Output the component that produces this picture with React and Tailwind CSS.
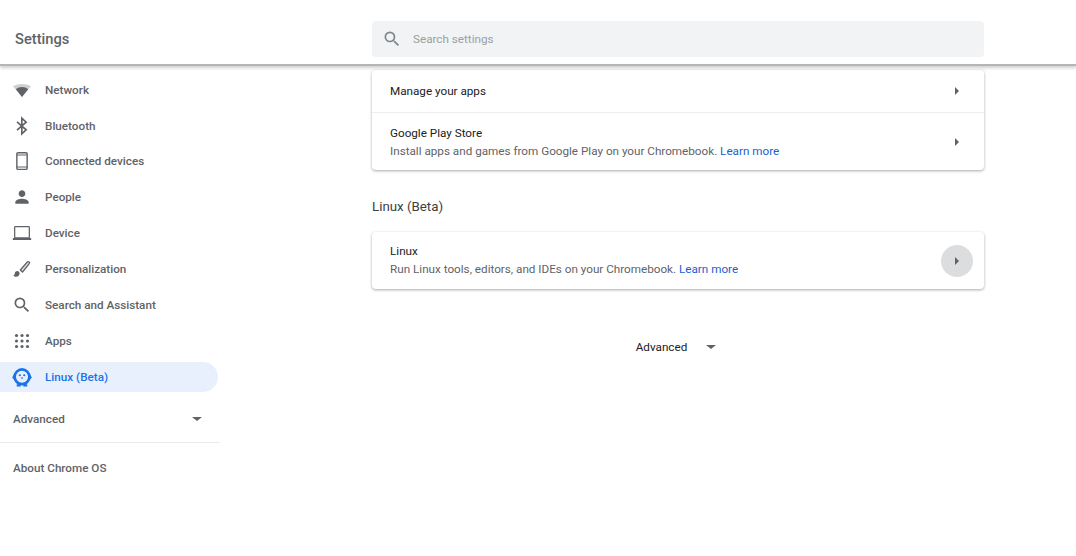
const I = ({ d, x = "" }) => (
  <svg viewBox="0 0 24 24" className={`w-[20px] h-[20px] fill-current ${x}`}><path d={d} /></svg>
);
const dots = [];
for (const cx of [5.4, 12, 18.6]) for (const cy of [5.4, 12, 18.6]) dots.push([cx, cy]);
const icons = {
  wifi: <svg viewBox="0 0 24 24" className="w-[20px] h-[20px]"><path d="M12 20.4 L1.2 7.4 C4.4 5.6 8 4.8 12 4.8 C16 4.8 19.6 5.6 22.8 7.4 Z" fill="#5f6368" fillOpacity="0.3"/><path d="M12 20.4 L4.6 11 C6.8 9.2 9.2 8.4 12 8.4 C14.8 8.4 17.2 9.2 19.4 11 Z" fill="#5f6368"/></svg>,
  bt: <svg viewBox="0 0 24 24" className="w-[20px] h-[20px]" fill="none" stroke="currentColor" strokeWidth="2"><path d="M6 7 L17 16.5 L11.8 21.5 V2.5 L17 7.5 L6 17" /></svg>,
  phone: <svg viewBox="0 0 24 24" className="w-[20px] h-[20px]" fill="none" stroke="currentColor"><rect x="5.8" y="2" width="12.4" height="20" rx="1.4" strokeWidth="1.7" /><path d="M5.8 4.8 H18.2 M5.8 19.2 H18.2" strokeWidth="1.3" /></svg>,
  person: <I d="M12 12c2.21 0 4-1.79 4-4s-1.79-4-4-4-4 1.79-4 4 1.79 4 4 4zm0 2c-2.67 0-8 1.34-8 4v2h16v-2c0-2.66-5.33-4-8-4z" />,
  laptop: <svg viewBox="0 0 24 24" className="w-[20px] h-[20px]"><rect x="3.2" y="4.2" width="17.6" height="13.6" rx="0.8" fill="none" stroke="currentColor" strokeWidth="1.5" /><path d="M1 18 H23 L23 20.4 H1 Z" fill="currentColor" /></svg>,
  brush: <svg viewBox="0 0 24 24" className="w-[20px] h-[20px]"><path d="M6.5 14.5c-1.9 0-3.2 1.4-3.2 3 0 1.3-.8 2-1.8 2.2.9 1.1 2.4 1.6 3.6 1.6 2.3 0 4-1.8 4-3.8 0-1.6-1.1-3-2.6-3z" fill="currentColor" /><path d="M10 13.2 L18.4 3.6 C19 3 19.9 3 20.6 3.6 C21.2 4.2 21.2 5 20.7 5.6 L12.6 15.6 Z" fill="#e3e4e5" stroke="currentColor" strokeWidth="1.6" strokeLinejoin="round" /></svg>,
  search: <I d="M15.5 14h-.79l-.28-.27A6.471 6.471 0 0 0 16 9.5 6.5 6.5 0 1 0 9.5 16c1.61 0 3.09-.59 4.23-1.57l.27.28v.79l5 4.99L20.49 19l-4.99-5zm-6 0C7.01 14 5 11.99 5 9.5S7.01 5 9.5 5 14 7.01 14 9.5 11.99 14 9.5 14z" />,
  apps: <svg viewBox="0 0 24 24" className="w-[20px] h-[20px] fill-current">{dots.map(([cx, cy]) => <circle key={`${cx}-${cy}`} cx={cx} cy={cy} r="1.9" />)}</svg>,
  penguin: (
    <svg viewBox="0 0 20 20" className="w-[20px] h-[20px] scale-110">
      <circle cx="10" cy="9.8" r="6.7" fill="none" stroke="currentColor" strokeWidth="2.4" />
      <path d="M3.4 6.8 L1 10.4 L3.4 13 Z M16.6 6.8 L19 10.4 L16.6 13 Z" fill="currentColor" />
      <path d="M5.2 16.6 h3.6 v2 h-3.6 Z M11.2 16.6 h3.6 v2 h-3.6 Z" fill="currentColor" />
      <circle cx="8" cy="8.4" r="1" fill="currentColor" />
      <circle cx="12" cy="8.4" r="1" fill="currentColor" />
      <path d="M8.8 10.4 h2.4 L10 12 Z" fill="currentColor" />
    </svg>
  ),
};
const nav = [
  ["wifi", "Network", "h-9"],
  ["bt", "Bluetooth", "h-[35px]"],
  ["phone", "Connected devices", "h-9"],
  ["person", "People", "h-9"],
  ["laptop", "Device", "h-9"],
  ["brush", "Personalization", "h-9"],
  ["search", "Search and Assistant", "h-9"],
  ["apps", "Apps", "h-9"],
];
const Caret = ({ x = "" }) => (
  <span className={`w-0 h-0 border-y-[4px] border-y-transparent border-l-[4px] border-l-[#5f6368] ${x}`} />
);
const Down = ({ x = "" }) => (
  <span className={`w-0 h-0 border-x-[5px] border-x-transparent border-t-[4px] border-t-[#5f6368] ${x}`} />
);
const Learn = () => <span className="text-[#1a5fd0]">Learn more</span>;

export default function App() {
  return (
    <div className="w-[1076px] h-[556px] overflow-hidden bg-white flex flex-col text-[11.7px] leading-[18px] text-[#5f6368] font-['Roboto',sans-serif]">
      <header className="h-[66px] shrink-0 flex items-start border-b-2 border-[#b4b5b7] shadow-[0_2px_3px_rgba(60,64,67,0.25)] relative z-10 bg-white">
        <div className="w-[372px] pl-[15px] pt-[30px] text-[14.7px] font-medium leading-[18px] text-[#5f6368]">Settings</div>
        <div className="mt-[21px] w-[612px] h-9 bg-[#f1f3f4] rounded-[4px] flex items-center pl-[10px] text-[#9aa0a6]">
          <span className="text-[#80868b]">{icons.search}</span>
          <span className="ml-[11px]">Search settings</span>
        </div>
      </header>
      <div className="flex flex-1">
        <nav className="w-[220px] shrink-0 pt-[6px] font-medium">
          {nav.map(([ic, label, h]) => (
            <div key={label} className={`${h} flex items-center pl-[12px]`}>
              <span className="w-[33px] shrink-0 flex">{icons[ic]}</span>
              <span>{label}</span>
            </div>
          ))}
          <div className="mt-[3px] h-[30px] w-[218px] bg-[#e8f0fe] rounded-r-full flex items-center pl-[12px] text-[#1a73e8]">
            <span className="w-[33px] shrink-0 flex">{icons.penguin}</span>
            <span>Linux (Beta)</span>
          </div>
          <div className="mt-[12px] h-[30px] flex items-center justify-between pl-[13px] pr-[18px]">
            <span>Advanced</span>
            <Down />
          </div>
          <div className="mt-[8px] h-px bg-[#e8eaed]" />
          <div className="mt-[16px] pl-[13px]">About Chrome OS</div>
        </nav>
        <main className="w-[612px] ml-[152px] pt-[4px]">
          <section className="rounded-[4px] bg-white shadow-[0_1px_3px_rgba(60,64,67,0.45)]">
            <div className="h-[43px] flex items-center justify-between pl-[18px] pr-[25px] border-b border-[#eeeeef]">
              <span className="text-[#202124]">Manage your apps</span>
              <Caret />
            </div>
            <div className="h-[57px] flex items-center justify-between pl-[18px] pr-[25px]">
              <div>
                <div className="text-[#202124]">Google Play Store</div>
                <div>Install apps and games from Google Play on your Chromebook. <Learn /></div>
              </div>
              <Caret />
            </div>
          </section>
          <h2 className="mt-[28px] text-[13.3px] leading-[18px] font-normal text-[#3c4043]">Linux (Beta)</h2>
          <section className="mt-[16px] h-[57px] rounded-[4px] bg-white shadow-[0_1px_3px_rgba(60,64,67,0.45)] flex items-center justify-between pl-[18px] pr-[11px]">
            <div className="-mt-[2px]">
              <div className="text-[#202124]">Linux</div>
              <div>Run Linux tools, editors, and IDEs on your Chromebook. <Learn /></div>
            </div>
            <span className="w-8 h-8 rounded-full bg-[#dcdddf] flex items-center justify-center"><Caret /></span>
          </section>
          <div className="mt-[49px] flex items-center justify-center text-[#202124] pr-[4px]">
            <span>Advanced</span>
            <Down x="ml-[19px]" />
          </div>
        </main>
      </div>
    </div>
  );
}
